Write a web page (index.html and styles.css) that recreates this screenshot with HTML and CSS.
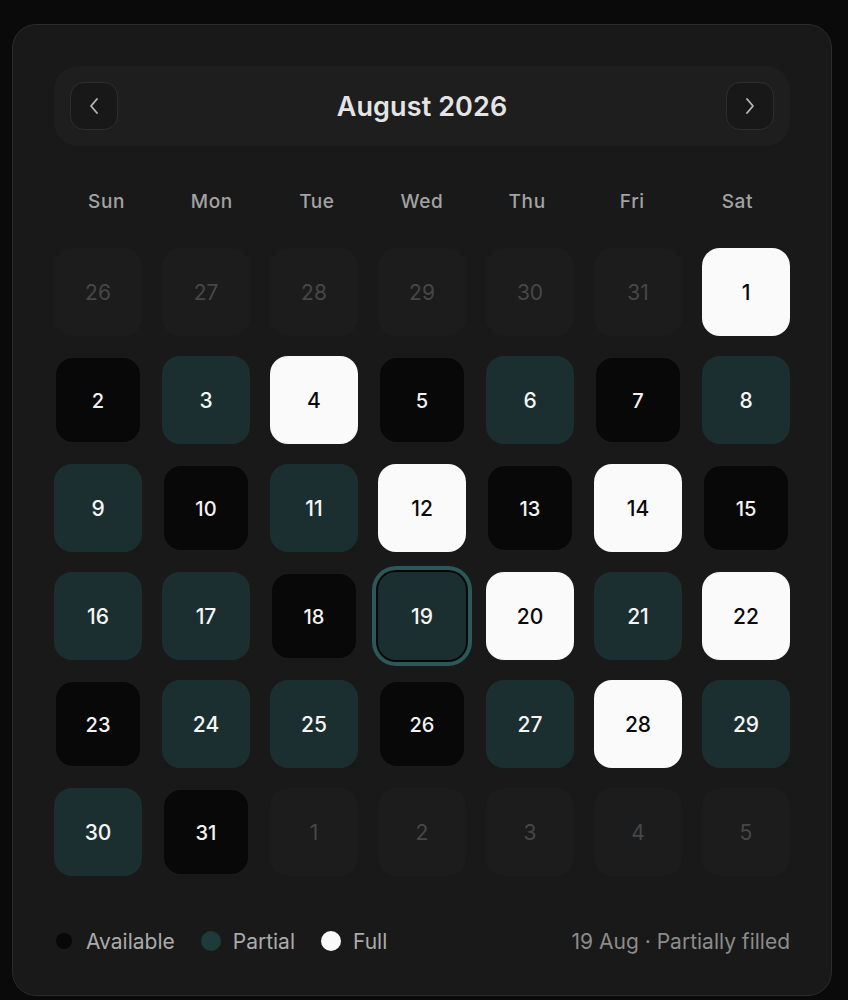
FILE: index.html
```html
<!DOCTYPE html>
<html lang="en">
  <head>
    <meta charset="UTF-8" />
    <meta name="viewport" content="width=device-width, initial-scale=1.0" />
    <title>Booking Calendar</title>
    <link rel="stylesheet" href="styles.css">
  </head>
  <body>
    <div class="card">
      <div class="month-bar">
        <button class="nav-btn" aria-label="Previous month">
          <svg width="20" height="20" viewBox="0 0 20 20" fill="none">
            <path d="M13 3 L7 10 L13 17" stroke="currentColor" stroke-width="1.9" stroke-linecap="round" stroke-linejoin="round" />
          </svg>
        </button>
        <h1 class="month-title">August 2026</h1>
        <button class="nav-btn" aria-label="Next month">
          <svg width="20" height="20" viewBox="0 0 20 20" fill="none">
            <path d="M7 3 L13 10 L7 17" stroke="currentColor" stroke-width="1.9" stroke-linecap="round" stroke-linejoin="round" />
          </svg>
        </button>
      </div>

      <div class="weekdays">
        <span>Sun</span>
        <span>Mon</span>
        <span>Tue</span>
        <span>Wed</span>
        <span>Thu</span>
        <span>Fri</span>
        <span>Sat</span>
      </div>

      <div class="days" id="days"></div>

      <div class="legend">
        <div class="legend-items">
          <span class="legend-item"><i class="dot dot-available"></i>Available</span>
          <span class="legend-item"><i class="dot dot-partial"></i>Partial</span>
          <span class="legend-item"><i class="dot dot-full"></i>Full</span>
        </div>
        <span class="selection">19 Aug · Partially filled</span>
      </div>
    </div>

    <script>
      const days = document.getElementById("days");

      // a = available, p = partial, f = full
      const status = "f" + "apfapap" + "papfafa" + "ppapfpf" + "appapfp" + "pa";
      const selected = 19;

      function addCell(label, cls) {
        const cell = document.createElement("div");
        cell.className = "day " + cls;
        cell.textContent = label;
        days.appendChild(cell);
      }

      [26, 27, 28, 29, 30, 31].forEach((d) => addCell(d, "outside"));

      const names = { a: "available", p: "partial", f: "full" };
      for (let d = 1; d <= 31; d++) {
        let cls = names[status[d - 1]];
        if (d === selected) cls += " selected";
        addCell(d, cls);
      }

      [1, 2, 3, 4, 5].forEach((d) => addCell(d, "outside"));
    </script>
  </body>
</html>
```

FILE: styles.css
```css
* {
  box-sizing: border-box;
}
body {
  margin: 0;
  padding: 24px 16px 0 12px;
  background-color: #0a0a0a;
  font-family: Inter, "Noto Sans", sans-serif;
  color: #fff;
}
.card {
  width: 820px;
  padding: 41px 41px 41px;
  background-color: #191919;
  border: 1px solid #2b2b2b;
  border-radius: 24px;
}
.month-bar {
  height: 80px;
  padding: 0 16px;
  display: flex;
  align-items: center;
  justify-content: space-between;
  background-color: #1e1e1e;
  border-radius: 24px;
}
.nav-btn {
  width: 48px;
  height: 48px;
  display: flex;
  align-items: center;
  justify-content: center;
  padding: 0;
  background-color: #181818;
  color: #b4b4b4;
  border: 1px solid #2e2e2e;
  border-radius: 14px;
  cursor: pointer;
}
.month-title {
  margin: 0;
  font-size: 27px;
  font-weight: 600;
  color: #e4e4e4;
  letter-spacing: 0.1px;
}
.weekdays {
  margin: 43px 0 33px;
  display: grid;
  grid-template-columns: repeat(7, 1fr);
  line-height: 26px;
  font-size: 19px;
  font-weight: 500;
  letter-spacing: 0.6px;
  color: #a3a3a3;
  text-align: center;
}
.days {
  display: grid;
  grid-template-columns: repeat(7, 88px);
  grid-auto-rows: 88px;
  gap: 20px;
}
.day {
  display: flex;
  align-items: center;
  justify-content: center;
  border-radius: 18px;
  font-size: 21px;
  font-weight: 500;
}
.day.outside {
  background-color: #1c1c1c;
  color: #474747;
  font-weight: 400;
}
.day.available {
  background-color: #080808;
  color: #f2f2f2;
  transform: scale(0.955);
}
.day.partial {
  background-color: #1c2f30;
  color: #f5f5f5;
}
.day.full {
  background-color: #fafafa;
  color: #0a0a0a;
}
.day.selected {
  box-shadow: 0 0 0 2px #080808, 0 0 0 6px #2b5858;
}
.legend {
  margin-top: 52px;
  height: 26px;
  display: flex;
  align-items: center;
  justify-content: space-between;
  font-size: 21px;
}
.legend-items {
  display: flex;
  align-items: center;
  gap: 26px;
}
.legend-item {
  display: flex;
  align-items: center;
  gap: 12px;
  color: #ababab;
}
.dot {
  width: 20px;
  height: 20px;
  border-radius: 50%;
}
.dot-available {
  width: 16px;
  height: 16px;
  margin: 0 2px 0 2px;
  background-color: #080808;
}
.dot-partial {
  background-color: #1f3a3a;
}
.dot-full {
  background-color: #fafafa;
}
.selection {
  color: #8c8c8c;
}
```
